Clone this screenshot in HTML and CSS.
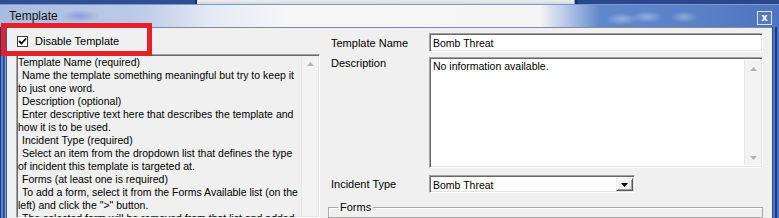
FILE: index.html
```html
<!DOCTYPE html>
<html lang="en">
<head>
    <meta charset="UTF-8">
    <title>Template</title>
    <link rel="stylesheet" href="styles.css">
</head>
<body>
    <div class="desktop">
        <div class="behind">
            <div class="behind-left"></div>
            <div class="behind-mid"></div>
            <div class="behind-right"></div>
        </div>
        <div class="window">
            <div class="titlebar">
                <span class="title">Template</span>
                <span class="close">x</span>
            </div>
            <div class="frame">
                <div class="edge edge-left"></div>
                <div class="client">
                    <div class="left-pane">
                        <label class="check-row">
                            <span class="checkbox">
                                <svg width="9" height="9" viewBox="0 0 9 9"><path d="M1 4 L3.5 6.5 L8 1.5" fill="none" stroke="#000" stroke-width="1.8"/></svg>
                            </span>
                            Disable Template
                        </label>
                        <div class="help-box sunken">
                            <div class="help-text">
                                <div>Template Name (required)</div>
                                <div class="ind">Name the template something meaningful but try to keep it</div>
                                <div>to just one word.</div>
                                <div class="ind">Description (optional)</div>
                                <div class="ind">Enter descriptive text here that describes the template and</div>
                                <div>how it is to be used.</div>
                                <div class="ind">Incident Type (required)</div>
                                <div class="ind">Select an item from the dropdown list that defines the type</div>
                                <div>of incident this template is targeted at.</div>
                                <div class="ind">Forms (at least one is required)</div>
                                <div class="ind">To add a form, select it from the Forms Available list (on the</div>
                                <div>left) and click the "&gt;" button.</div>
                                <div class="ind">The selected form will be removed from that list and added</div>
                            </div>
                            <div class="vscroll">
                                <svg class="arrow" width="7" height="4" viewBox="0 0 7 4"><path d="M0 4 L3.5 0 L7 4 Z" fill="#b4b4b4"/></svg>
                            </div>
                        </div>
                    </div>
                    <div class="right-pane">
                        <div class="row row-name">
                            <span class="label">Template Name</span>
                            <div class="field sunken">Bomb Threat</div>
                        </div>
                        <div class="row row-desc">
                            <span class="label">Description</span>
                            <div class="memo sunken">
                                <div class="memo-text">No information available.</div>
                                <div class="vscroll">
                                    <svg class="arrow" width="7" height="4" viewBox="0 0 7 4"><path d="M0 4 L3.5 0 L7 4 Z" fill="#b4b4b4"/></svg>
                                    <svg class="arrow" width="7" height="4" viewBox="0 0 7 4"><path d="M0 0 L3.5 4 L7 0 Z" fill="#b4b4b4"/></svg>
                                </div>
                            </div>
                        </div>
                        <div class="row row-type">
                            <span class="label">Incident Type</span>
                            <div class="combo sunken">
                                <span class="combo-text">Bomb Threat</span>
                                <span class="combo-btn">
                                    <svg width="7" height="4" viewBox="0 0 7 4"><path d="M0 0 L3.5 4 L7 0 Z" fill="#000"/></svg>
                                </span>
                            </div>
                        </div>
                        <fieldset class="groupbox">
                            <legend>Forms</legend>
                        </fieldset>
                    </div>
                </div>
                <div class="edge edge-right"></div>
            </div>
        </div>
        <div class="highlight"></div>
    </div>
</body>
</html>
```

FILE: styles.css
```css
* {
    box-sizing: border-box;
}

body {
    margin: 0;
    font-family: "Liberation Sans", Arial, sans-serif;
    font-size: 11px;
    color: #000;
}

.desktop {
    position: relative;
    width: 779px;
    height: 218px;
    overflow: hidden;
    background: #2a4a8e;
}

/* windows behind the dialog */
.behind {
    display: flex;
    height: 4px;
}

.behind-left {
    width: 197px;
    background: #2e4f93;
    border-right: 2px solid #182f66;
}

.behind-mid {
    width: 378px;
    background: linear-gradient(to bottom, #eceef1, #d3d8df);
    border-right: 1px solid #8f9bb0;
}

.behind-right {
    flex: 1;
    background: #28498f;
    border-left: 3px solid #1a3472;
}

/* dialog */
.window {
    height: 214px;
    display: flex;
    flex-direction: column;
}

.titlebar {
    flex-shrink: 0;
    height: 23px;
    display: flex;
    align-items: center;
    background:
        radial-gradient(ellipse 20px 6px at 80px 11px, rgba(110, 130, 210, 0.6), transparent),
        radial-gradient(ellipse 16px 6px at 622px 14px, rgba(200, 215, 245, 0.5), transparent),
        radial-gradient(ellipse 16px 6px at 647px 12px, rgba(200, 215, 245, 0.5), transparent),
        radial-gradient(ellipse 14px 6px at 684px 12px, rgba(200, 215, 245, 0.45), transparent),
        linear-gradient(to right, #a9bcdf 0, #bccbe7 140px, #e4e9f3 210px, #f7f7f8 290px, #f5f5f6 540px, #a9bde2 572px, #6088cc 600px, #5a80c6 700px, #4d74bf 779px);
    border-top: 1px solid #7f98c8;
}

.title {
    padding-left: 9px;
    font-size: 12px;
    color: #111;
}

.close {
    margin-left: auto;
    margin-right: 7px;
    margin-top: 4px;
    width: 15px;
    height: 14px;
    display: flex;
    align-items: center;
    justify-content: center;
    border: 1px solid #dce5f5;
    background: #5679be;
    color: #fff;
    font-family: "DejaVu Sans", sans-serif;
    font-size: 10px;
    font-weight: bold;
    line-height: 1;
    padding-bottom: 1px;
}

.frame {
    flex: 1;
    min-height: 0;
    display: flex;
}

.edge {
    width: 7px;
}

.edge-left {
    background: linear-gradient(to right, #1d3b80 0 1px, #5a82cb 1px 3px, #2b51a2 3px 5px, #86a2d8 5px 6px, #3c5c9c 6px 7px);
}

.edge-right {
    background: linear-gradient(to right, #2c4a8a 0 1px, #4f78c4 1px 3px, #1d3a80 3px 5px, #4a72c0 5px 7px);
}

.client {
    flex: 1;
    display: flex;
    background: #f0f0f0;
    border-top: 1px solid #7d8ba6;
    overflow: hidden;
}

/* classic 3D sunken edit border */
.sunken {
    border: 1px solid;
    border-color: #a0a0a0 #fff #fff #a0a0a0;
    box-shadow: inset 1px 1px #696969, inset -1px -1px #e3e3e3;
}

/* left: help text */
.left-pane {
    width: 313px;
    padding-left: 9px;
    display: flex;
    flex-direction: column;
    min-height: 0;
}

.check-row {
    flex-shrink: 0;
    height: 26px;
    display: flex;
    align-items: center;
    padding-left: 1px;
    gap: 7px;
}

.checkbox {
    width: 11px;
    height: 11px;
    display: flex;
    align-items: center;
    justify-content: center;
    background: #fff;
    border: 1px solid #3a3a3a;
}

.help-box {
    flex: 1;
    min-height: 0;
    display: flex;
    width: 304px;
    background: #f0f0f0;
    overflow: hidden;
}

.help-text {
    flex: 1;
    padding: 1px 0 0 1px;
    font-size: 10.5px;
    line-height: 13px;
    overflow: hidden;
}

.help-text div {
    white-space: pre;
}

.help-text .ind {
    padding-left: 4px;
}

.vscroll {
    width: 17px;
    margin: 2px 1px 1px 0;
    background: #f3f3f3;
    border-left: 1px solid #e6e6e6;
    display: flex;
    flex-direction: column;
    align-items: center;
    justify-content: space-between;
    padding: 5px 0 8px;
}

/* right: fields */
.right-pane {
    flex: 1;
    padding: 5px 9px 0 8px;
    display: flex;
    flex-direction: column;
}

.row {
    display: flex;
    align-items: center;
}

.label {
    width: 98px;
    margin-left: 3px;
}

.field {
    flex: 1;
    height: 19px;
    background: #fff;
    font-size: 10.5px;
    padding-left: 3px;
    display: flex;
    align-items: center;
}

.row-desc {
    margin-top: 5px;
    align-items: flex-start;
}

.row-desc .label {
    line-height: 13px;
}

.memo {
    flex: 1;
    height: 111px;
    display: flex;
    background: #fff;
}

.memo-text {
    flex: 1;
    padding: 2px 0 0 3px;
    font-size: 10.5px;
    line-height: 13px;
}

.memo .vscroll {
    margin: 2px 1px 2px 0;
    padding: 7px 0 5px;
}

.row-type {
    margin-top: 7px;
}

.combo {
    width: 206px;
    height: 18px;
    display: flex;
    align-items: stretch;
    background: #fff;
    padding: 2px 1px 1px 2px;
}

.combo-text {
    flex: 1;
    font-size: 10.5px;
    padding-left: 1px;
    display: flex;
    align-items: center;
}

.combo-btn {
    width: 17px;
    display: flex;
    align-items: center;
    justify-content: center;
    background: #f0f0f0;
    border: 1px solid;
    border-color: #f0f0f0 #5a5a5a #5a5a5a #f0f0f0;
    box-shadow: inset 1px 1px #fff, inset -1px -1px #a0a0a0;
}

.groupbox {
    margin: 8px 0 0 0;
    padding: 0 9px;
    height: 60px;
    border: 1px solid #a7a7a7;
    box-shadow: inset 1px 1px #fff;
    min-width: 0;
}

.groupbox legend {
    padding: 0 2px;
    font-size: 11px;
    line-height: 13px;
}

/* red annotation box */
.highlight {
    position: absolute;
    left: 1px;
    top: 23px;
    width: 151px;
    height: 33px;
    border: 5px solid #e3212b;
}
```
